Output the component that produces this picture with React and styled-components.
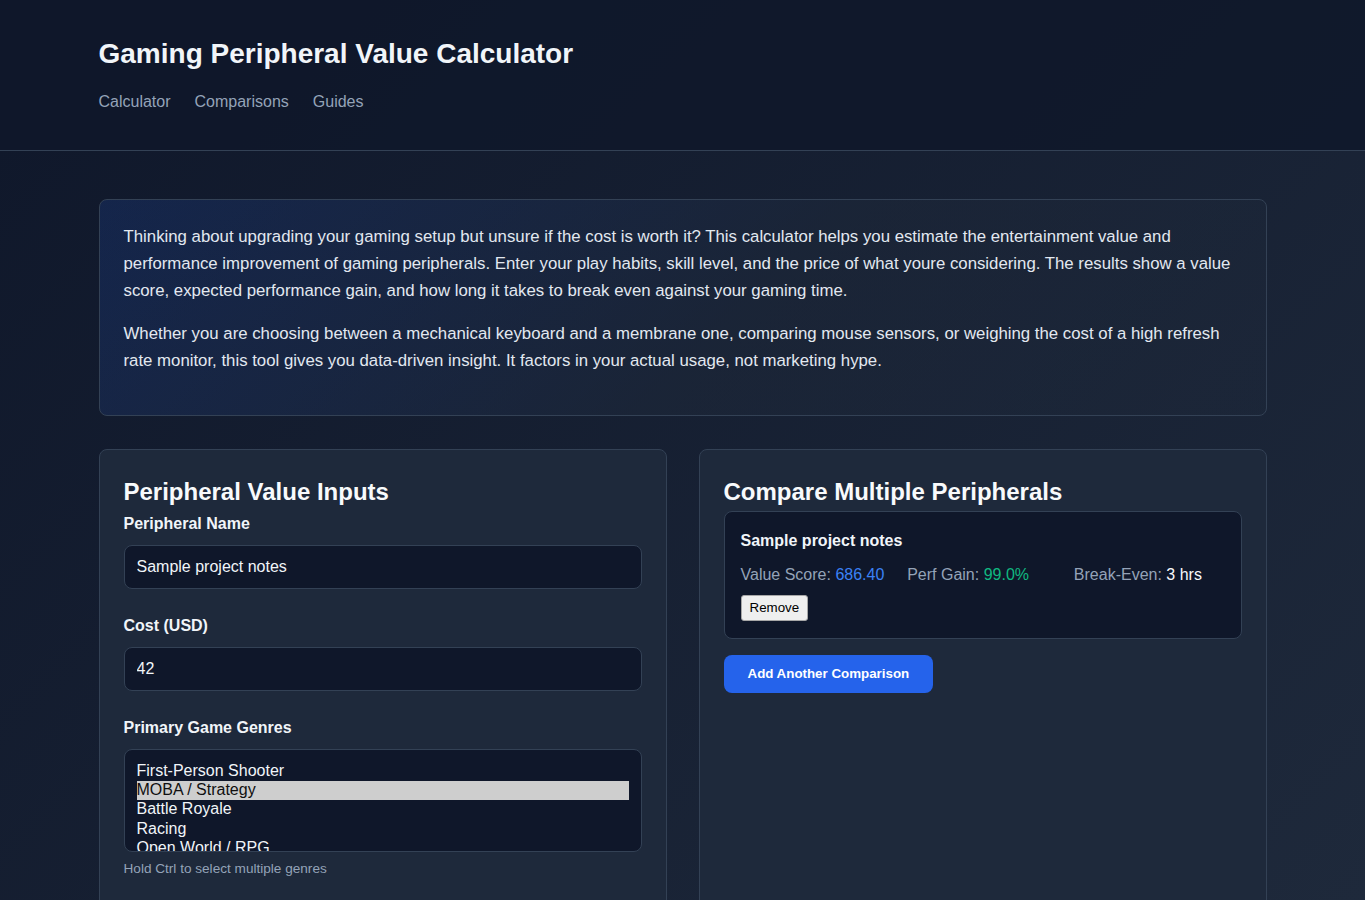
import React, { useState } from 'react';
import styled, { createGlobalStyle } from 'styled-components';

const GlobalStyle = createGlobalStyle`
  * { box-sizing: border-box; }
  html, body {
    margin: 0;
    min-height: 100%;
  }
  body {
    font-family: "Liberation Sans", Arial, sans-serif;
    color: #e2e8f0;
    background: linear-gradient(135deg, #0f172a 0%, #1e293b 100%);
    background-attachment: fixed;
    min-height: 100vh;
  }
`;

const Header = styled.header`
  background: rgba(15, 23, 42, 0.85);
  border-bottom: 1px solid #334155;
  padding: 37px 0 36px;
`;

const Container = styled.div`
  max-width: 1200px;
  margin: 0 auto;
  padding: 0 16px;
`;

const Title = styled.h1`
  margin: 0 0 19px;
  font-size: 28px;
  line-height: 34px;
  font-weight: 700;
  color: #f1f5f9;
`;

const Nav = styled.nav`
  display: flex;
  gap: 24px;
`;

const NavLink = styled.a`
  color: #94a3b8;
  font-size: 16px;
  line-height: 24px;
  text-decoration: none;
`;

const Main = styled.main`
  padding: 48px 0;
`;

const Intro = styled.section`
  background: linear-gradient(135deg, rgba(37, 99, 235, 0.16) 0%, rgba(30, 41, 59, 0.5) 55%, rgba(30, 41, 59, 0.35) 100%);
  border: 1px solid #334155;
  border-radius: 8px;
  padding: 23px 24px 25px;
  margin-bottom: 33px;

  p {
    margin: 0 0 16px;
    font-size: 16.8px;
    line-height: 27px;
    color: #e2e8f0;
  }
`;

const Grid = styled.div`
  display: grid;
  grid-template-columns: 1fr 1fr;
  gap: 32px;
  align-items: stretch;
`;

const Card = styled.section`
  background: #1e293b;
  border: 1px solid #334155;
  border-radius: 8px;
  padding: 24px;
  min-height: 480px;
`;

const CardTitle = styled.h2`
  margin: 0 0 2px;
  font-size: 24px;
  line-height: 36px;
  font-weight: 700;
  color: #f8fafc;
`;

const Field = styled.div`
  margin-bottom: 25px;
`;

const Label = styled.label`
  display: block;
  font-size: 16px;
  font-weight: 700;
  line-height: 24px;
  margin-bottom: 9px;
  color: #f1f5f9;
`;

const TextInput = styled.input`
  display: block;
  width: 100%;
  height: 44px;
  padding: 0 12px;
  font-family: inherit;
  font-size: 16px;
  color: #f1f5f9;
  background: #0f172a;
  border: 1px solid #334155;
  border-radius: 8px;
  outline: none;
`;

const MultiSelect = styled.select`
  display: block;
  width: 100%;
  height: 103px;
  padding: 12px;
  font-family: inherit;
  font-size: 16px;
  color: #f1f5f9;
  background: #0f172a;
  border: 1px solid #334155;
  border-radius: 8px;
  outline: none;
  overflow: hidden;

  option {
    padding: 0;
    line-height: 19px;
  }
`;

const Hint = styled.small`
  display: block;
  margin-top: 9px;
  font-size: 13.6px;
  color: #94a3b8;
`;

const CompareItem = styled.div`
  background: #0f172a;
  border: 1px solid #334155;
  border-radius: 8px;
  padding: 17px 16px;
  margin-top: -1px;
`;

const ItemName = styled.div`
  font-size: 16px;
  line-height: 24px;
  font-weight: 700;
  color: #f1f5f9;
`;

const Stats = styled.div`
  display: grid;
  grid-template-columns: repeat(3, 1fr);
  gap: 16px;
  margin-top: 10px;
  font-size: 16px;
  line-height: 24px;
  color: #94a3b8;
`;

const StatValue = styled.span`
  color: ${(p) => p.$tone};
`;

const RemoveButton = styled.button`
  margin-top: 8px;
  padding: 4px 8px;
  font-family: inherit;
  font-size: 13.33px;
  line-height: 16px;
  color: #000;
  background: #efefef;
  border: 1px solid #a7a7a7;
  border-radius: 3px;
`;

const AddButton = styled.button`
  margin-top: 16px;
  padding: 11px 24px;
  font-family: inherit;
  font-size: 13.33px;
  line-height: 16px;
  font-weight: 700;
  color: #fff;
  background: #2563eb;
  border: none;
  border-radius: 8px;
`;

const genres = [
  ['fps', 'First-Person Shooter'],
  ['moba', 'MOBA / Strategy'],
  ['br', 'Battle Royale'],
  ['racing', 'Racing'],
  ['rpg', 'Open World / RPG'],
  ['sim', 'Simulation'],
];

export default function App() {
  const [name, setName] = useState('Sample project notes');
  const [cost, setCost] = useState('42');
  const [picked, setPicked] = useState(['moba']);

  return (
    <>
      <GlobalStyle />
      <Header>
        <Container>
          <Title>Gaming Peripheral Value Calculator</Title>
          <Nav>
            <NavLink href="#calculator">Calculator</NavLink>
            <NavLink href="#comparisons">Comparisons</NavLink>
            <NavLink href="#guides">Guides</NavLink>
          </Nav>
        </Container>
      </Header>
      <Main>
        <Container>
          <Intro>
            <p>
              Thinking about upgrading your gaming setup but unsure if the cost is worth it? This calculator helps you estimate the entertainment value and performance improvement of gaming peripherals. Enter your play habits, skill level, and the price of what youre considering. The results show a value score, expected performance gain, and how long it takes to break even against your gaming time.
            </p>
            <p>
              Whether you are choosing between a mechanical keyboard and a membrane one, comparing mouse sensors, or weighing the cost of a high refresh rate monitor, this tool gives you data-driven insight. It factors in your actual usage, not marketing hype.
            </p>
          </Intro>
          <Grid>
            <Card>
              <CardTitle>Peripheral Value Inputs</CardTitle>
              <Field>
                <Label htmlFor="name">Peripheral Name</Label>
                <TextInput id="name" value={name} onChange={(e) => setName(e.target.value)} />
              </Field>
              <Field>
                <Label htmlFor="cost">Cost (USD)</Label>
                <TextInput id="cost" value={cost} onChange={(e) => setCost(e.target.value)} />
              </Field>
              <Field>
                <Label htmlFor="genres">Primary Game Genres</Label>
                <MultiSelect
                  id="genres"
                  multiple
                  value={picked}
                  onChange={(e) => setPicked(Array.from(e.target.selectedOptions, (o) => o.value))}
                >
                  {genres.map(([value, label]) => (
                    <option key={value} value={value}>{label}</option>
                  ))}
                </MultiSelect>
                <Hint>Hold Ctrl to select multiple genres</Hint>
              </Field>
            </Card>
            <Card>
              <CardTitle>Compare Multiple Peripherals</CardTitle>
              <CompareItem>
                <ItemName>{name}</ItemName>
                <Stats>
                  <div>Value Score: <StatValue $tone="#3b82f6">686.40</StatValue></div>
                  <div>Perf Gain: <StatValue $tone="#10b981">99.0%</StatValue></div>
                  <div>Break-Even: <StatValue $tone="#f8fafc">3 hrs</StatValue></div>
                </Stats>
                <RemoveButton>Remove</RemoveButton>
              </CompareItem>
              <AddButton>Add Another Comparison</AddButton>
            </Card>
          </Grid>
        </Container>
      </Main>
    </>
  );
}
